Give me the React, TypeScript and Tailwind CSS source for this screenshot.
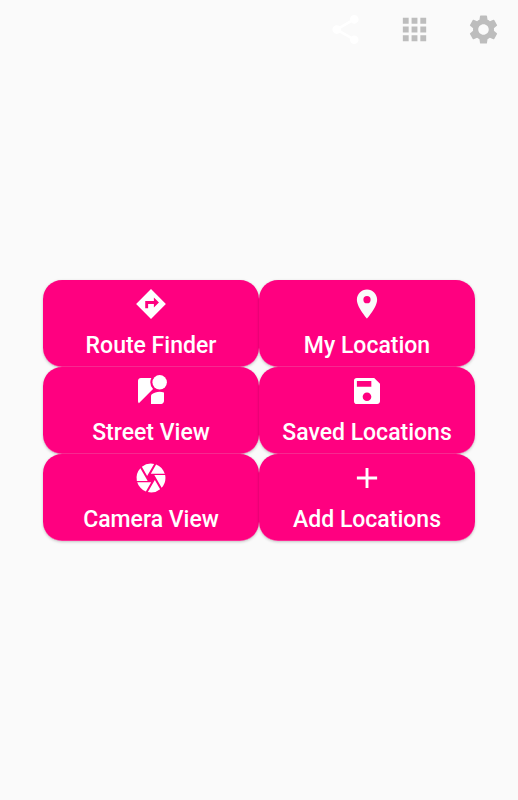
import { ReactNode } from "react";
import {
  MdAdd,
  MdApps,
  MdCamera,
  MdLocationOn,
  MdSave,
  MdSettings,
  MdShare,
  MdStreetview,
} from "react-icons/md";

// sharp-cornered variant of the material directions sign
const DirectionsIcon = () => (
  <svg viewBox="0 0 24 24" width={36} height={36} fill="currentColor">
    <path d="M22.3 12L12 1.7 1.7 12 12 22.3 22.3 12zM14 14.5V12h-4v3H8v-5h6V7.5l3.5 3.5-3.5 3.5z" />
  </svg>
);

const tiles: { label: string; icon: ReactNode }[] = [
  { label: "Route Finder", icon: <DirectionsIcon /> },
  { label: "My Location", icon: <MdLocationOn size={36} color="#fafafa" /> },
  { label: "Street View", icon: <MdStreetview size={36} /> },
  { label: "Saved Locations", icon: <MdSave size={36} /> },
  { label: "Camera View", icon: <MdCamera size={36} /> },
  { label: "Add Locations", icon: <MdAdd size={36} /> },
];

export default function App() {
  return (
    <main className="h-[800px] w-full overflow-hidden bg-[#fafafa] font-['Roboto',sans-serif]">
      <header className="flex h-[59px] items-center justify-end gap-[34px] pr-[17px] text-[#bdbdbd]">
        <MdShare size={35} className="text-white" />
        <MdApps size={35} />
        <MdSettings size={35} />
      </header>
      <section className="mt-[221px] ml-[43px] grid w-[432px] grid-cols-2">
        {tiles.map(({ label, icon }) => (
          <button
            key={label}
            className="flex h-[87px] flex-col items-center rounded-[19px] bg-[#ff0080] pt-[6px] text-white shadow-[0_1px_3px_rgba(0,0,0,0.22),inset_0_-0.5px_0_rgba(250,250,250,0.35)]"
          >
            <span className="scale-[0.963]">{icon}</span>
            <span className="mt-[10px] text-[23px] leading-[28px] font-medium">{label}</span>
          </button>
        ))}
      </section>
    </main>
  );
}
